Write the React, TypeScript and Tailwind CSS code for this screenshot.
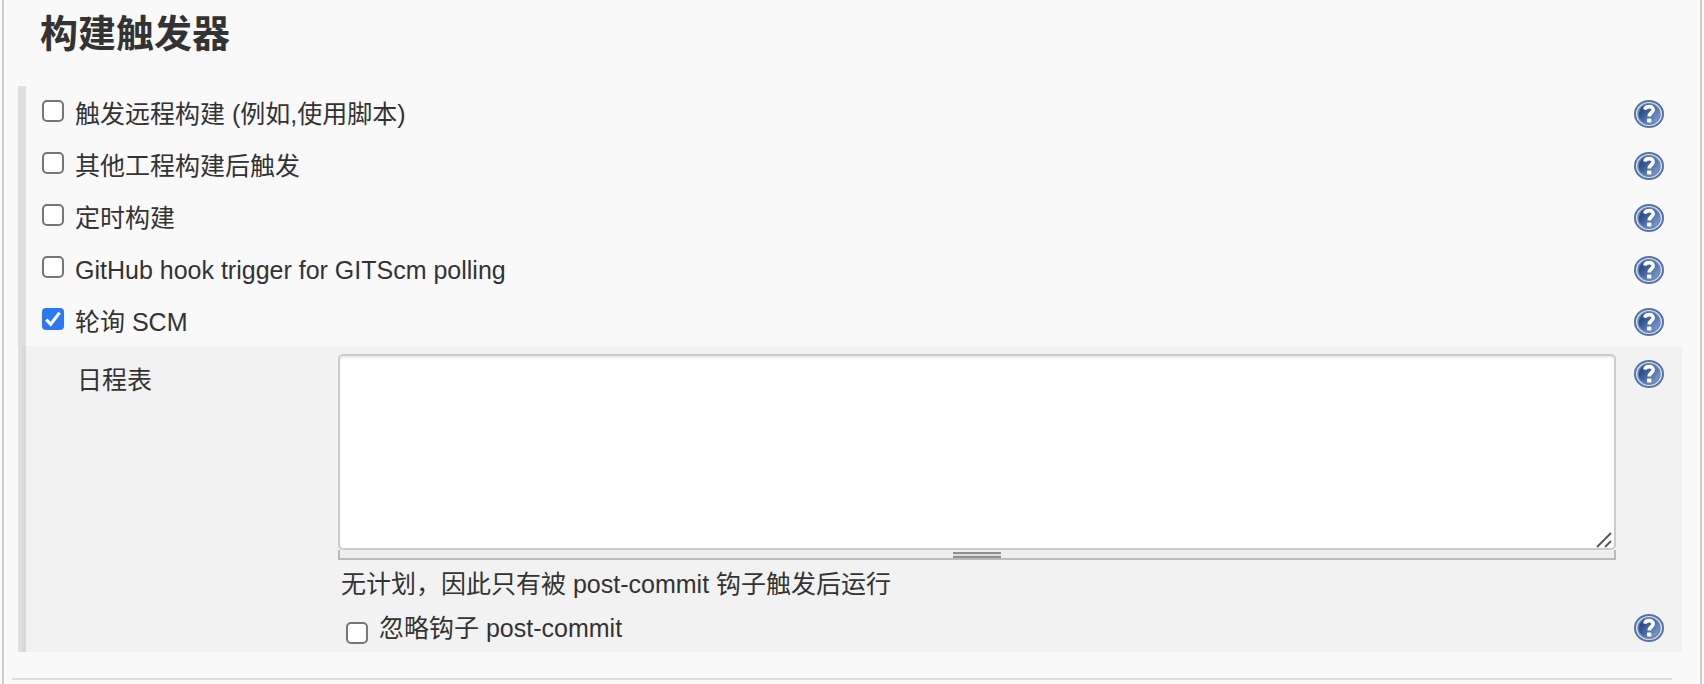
import { useState } from "react";

function Check({ id, checked, onChange }: { id: string; checked: boolean; onChange: () => void }) {
  return (
    <span className="grid h-[22px] w-[22px] shrink-0">
      <input
        id={id}
        type="checkbox"
        checked={checked}
        onChange={onChange}
        className="col-start-1 row-start-1 h-[22px] w-[22px] appearance-none rounded-[5px] border-2 border-[#767676] bg-white checked:rounded-[4px] checked:border-[#2b78f6] checked:bg-[#2b78f6]"
      />
      {checked && (
        <svg viewBox="0 0 22 22" className="pointer-events-none col-start-1 row-start-1 h-[22px] w-[22px]" aria-hidden="true">
          <path d="M4.2 11.6 L8.7 16.2 L17.6 4.6" fill="none" stroke="#fff" strokeWidth="3.2" />
        </svg>
      )}
    </span>
  );
}

function Help({ topic }: { topic: string }) {
  return (
    <button type="button" aria-label={`Help: ${topic}`} className="h-7 w-[30px] shrink-0">
      <svg viewBox="0 0 30 28" className="h-7 w-[30px]" aria-hidden="true">
        <defs>
          <linearGradient id="help-fill" x1="0" y1="0.1" x2="1" y2="0.9">
            <stop offset="0.25" stopColor="#2c4f8d" />
            <stop offset="1" stopColor="#86a6d4" />
          </linearGradient>
        </defs>
        <ellipse cx="15" cy="14" rx="14" ry="13" fill="#dfe7f3" stroke="#5573a8" strokeWidth="2" />
        <ellipse cx="15" cy="14" rx="11" ry="10.4" fill="url(#help-fill)" stroke="#6985b5" strokeWidth="1.4" />
        <path d="M10.8 9.6 C11.6 5.6 19.4 5.6 19.2 9.9 C19.1 13 15.2 12.6 15.2 16.6" fill="none" stroke="#fff" strokeWidth="3.6" />
        <rect x="13" y="18.6" width="4.4" height="4" rx="0.8" fill="#fff" />
      </svg>
    </button>
  );
}

const triggers = [
  { id: "remote", label: "触发远程构建 (例如,使用脚本)" },
  { id: "upstream", label: "其他工程构建后触发" },
  { id: "timer", label: "定时构建" },
  { id: "github", label: "GitHub hook trigger for GITScm polling" },
  { id: "scm", label: "轮询 SCM" },
];

export default function App() {
  const [active, setActive] = useState<Record<string, boolean>>({ scm: true });
  const toggle = (id: string) => setActive((a) => ({ ...a, [id]: !a[id] }));

  return (
    <div className="min-h-screen bg-[#f9f9f9] px-0.5 font-['Liberation_Sans','Noto_Sans_CJK_SC',sans-serif] text-[25px] leading-8 text-[#333]">
      <main className="min-h-screen border-r-2 border-l-2 border-[#ccc]">
        <h2 className="pt-2.5 pl-9 text-[38px] leading-12 font-bold">构建触发器</h2>
        <section className="mt-7 mr-4.5 ml-3.5 border-l-8 border-[#dfdfdf]">
          {triggers.map(({ id, label }) => (
            <div key={id} className="flex h-13 items-start pt-3 pr-4.5 pl-4">
              <div className="flex flex-1 items-start gap-[11px]">
                <div className="pt-0.5">
                  <Check id={id} checked={!!active[id]} onChange={() => toggle(id)} />
                </div>
                <label htmlFor={id}>{label}</label>
              </div>
              <div className="flex pt-0.5">
                <Help topic={label} />
              </div>
            </div>
          ))}
          <div className="-ml-1 border-l-4 border-[#d9d9d9] bg-[#f2f2f2] pt-2 pr-4.5 pb-2">
            <div className="flex">
              <label htmlFor="schedule" className="w-[312px] shrink-0 pt-2.5 pl-[51px]">
                日程表
              </label>
              <div className="mr-4.5 flex-1">
                <div className="relative">
                  <textarea
                    id="schedule"
                    className="block h-[196px] w-full resize-none rounded-[5px] border-2 border-[#ccc] bg-white p-2 shadow-[inset_0_2px_2px_rgba(0,0,0,0.08)] outline-none"
                  />
                  <svg viewBox="0 0 16 16" className="absolute right-1 bottom-0.5 h-4 w-4" aria-hidden="true">
                    <path d="M1 15 L15 1 M9 15 L15 9" stroke="#555" strokeWidth="1.8" />
                  </svg>
                </div>
                <div className="flex h-2.5 justify-center border-x-2 border-b-2 border-[#bbbbb3] bg-[#eee] pt-0.5">
                  <div className="h-1.5 w-12 border-y-2 border-[#8e8e8c] bg-[#ddd]" />
                </div>
                <p className="pt-2 pl-[3px]">无计划，因此只有被 post-commit 钩子触发后运行</p>
              </div>
              <div className="pt-1.5">
                <Help topic="日程表" />
              </div>
            </div>
            <div className="mt-3 flex items-start pl-[320px]">
              <div className="flex flex-1 items-start gap-[11px]">
                <div className="pt-2.5">
                  <Check id="ignore" checked={!!active.ignore} onChange={() => toggle("ignore")} />
                </div>
                <label htmlFor="ignore">忽略钩子 post-commit</label>
              </div>
              <div className="flex pt-0.5">
                <Help topic="忽略钩子 post-commit" />
              </div>
            </div>
          </div>
        </section>
        <hr className="mt-[26px] mr-7 ml-2 border-t-2 border-[#ddd]" />
      </main>
    </div>
  );
}
